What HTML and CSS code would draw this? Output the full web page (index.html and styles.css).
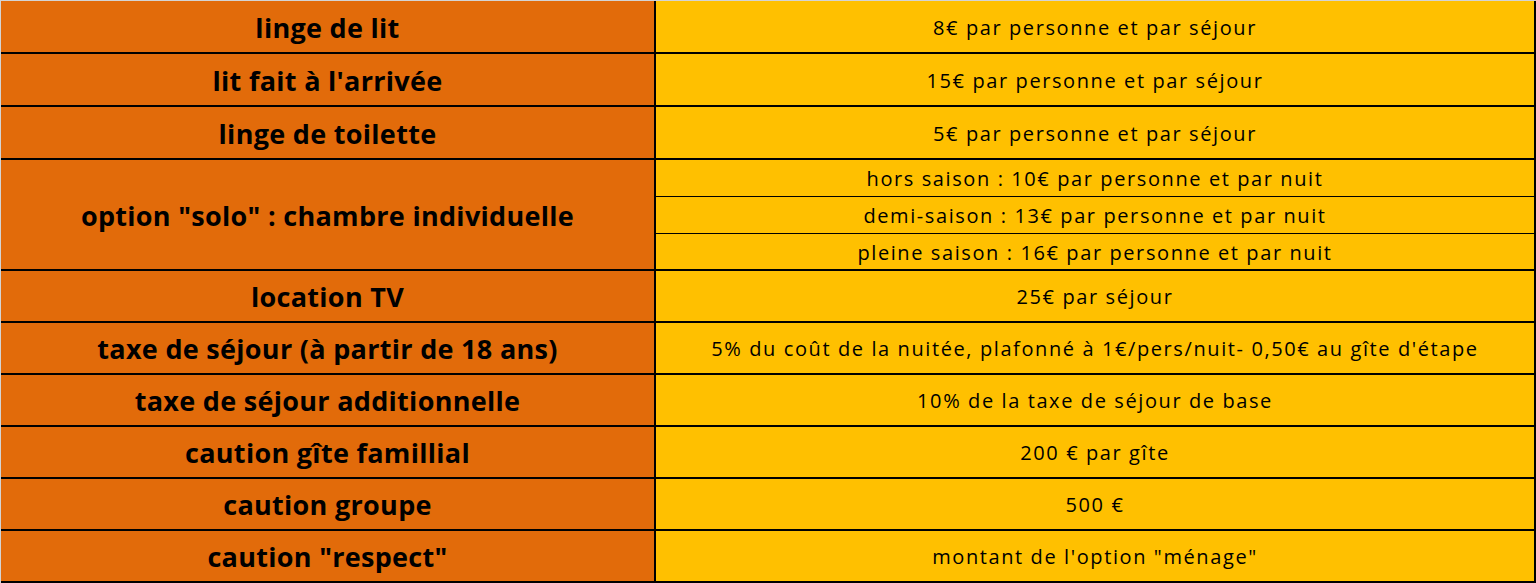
FILE: index.html
```html
<!DOCTYPE html>
<html lang="fr">
<head>
<meta charset="utf-8">
<title>Options et taxes</title>
<link rel="stylesheet" href="styles.css">
</head>
<body>
<div class="sheet">
  <div class="label">linge de lit</div>
  <div class="value">8€ par personne et par séjour</div>

  <div class="label">lit fait à l'arrivée</div>
  <div class="value">15€ par personne et par séjour</div>

  <div class="label">linge de toilette</div>
  <div class="value">5€ par personne et par séjour</div>

  <div class="label">option "solo" : chambre individuelle</div>
  <div class="value split">
    <div class="sub">hors saison : 10€ par personne et par nuit</div>
    <div class="sub">demi-saison : 13€ par personne et par nuit</div>
    <div class="sub">pleine saison : 16€ par personne et par nuit</div>
  </div>

  <div class="label">location TV</div>
  <div class="value">25€ par séjour</div>

  <div class="label">taxe de séjour (à partir de 18 ans)</div>
  <div class="value">5% du coût de la nuitée, plafonné à 1€/pers/nuit- 0,50€ au gîte d'étape</div>

  <div class="label">taxe de séjour additionnelle</div>
  <div class="value">10% de la taxe de séjour de base</div>

  <div class="label">caution gîte famillial</div>
  <div class="value">200 € par gîte</div>

  <div class="label">caution groupe</div>
  <div class="value">500 €</div>

  <div class="label">caution "respect"</div>
  <div class="value">montant de l'option "ménage"</div>
</div>
</body>
</html>
```

FILE: styles.css
```css
html, body {
  margin: 0;
  padding: 0;
  background: #ffffff;
}

.sheet {
  width: 1533px;
  height: 580px;
  display: grid;
  grid-template-columns: 653px 878px;
  grid-template-rows: 51px 51px 51px 109px 50px 50px 50px 50px 50px 50px;
  column-gap: 2px;
  row-gap: 2px;
  background: #000000;
  border-top: 1px solid #d4d4d4;
  border-left: 1px solid #d4d4d4;
  padding: 0 2px 2px 0;
  font-family: "Open Sans", "Liberation Sans", sans-serif;
  font-variant-ligatures: none;
  color: #000000;
}

.label {
  background: #e26b0a;
  display: flex;
  align-items: center;
  justify-content: center;
  padding-top: 1px;
  font-weight: bold;
  font-size: 27px;
  letter-spacing: 0.3px;
  white-space: nowrap;
}

.value {
  background: #ffc000;
  display: flex;
  align-items: center;
  justify-content: center;
  padding-top: 1px;
  font-size: 20px;
  letter-spacing: 1.6px;
  white-space: nowrap;
}

.value.split {
  display: grid;
  grid-template-columns: 1fr;
  grid-template-rows: 36px 36px 35px;
  row-gap: 1px;
  align-items: stretch;
  justify-items: stretch;
  align-content: start;
  justify-content: stretch;
  padding-top: 0;
  background: #000000;
}

.sub {
  background: #ffc000;
  display: flex;
  align-items: center;
  justify-content: center;
  padding-top: 1px;
}
```
